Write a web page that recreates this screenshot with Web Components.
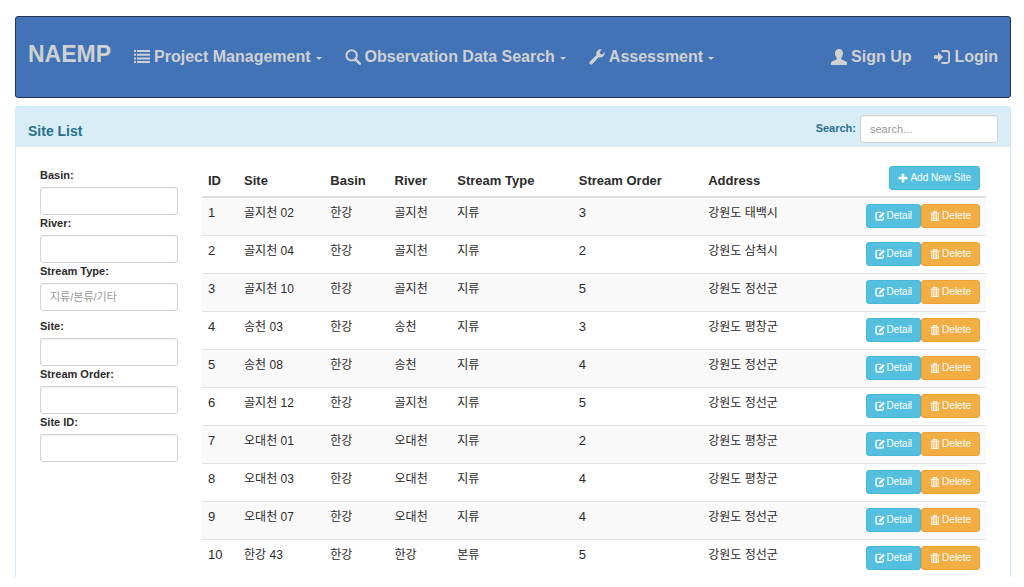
<!DOCTYPE html>
<html lang="en">
<head>
<meta charset="utf-8">
<meta name="viewport" content="width=device-width, initial-scale=1">
<title>NAEMP - Site List</title>
<style>
  :root {
    --primary: #4373b7;
    --info: #54bfdf;
    --warning: #f2ad43;
    --heading: #d9edf7;
    --heading-text: #28708f;
    --field-width: 138px;
  }

  body {
    margin: 16px 13px 0 15px;
    background: #ffffff;
    color: #2b2b2b;
    font-family: "Liberation Sans", "Noto Sans CJK KR", sans-serif;
    font-size: 13px;
  }
</style>
</head>
<body>
  <app-navbar>
    <a slot="brand" href="#">NAEMP</a>
    <nav-item icon="list" dropdown>Project Management</nav-item>
    <nav-item icon="search" dropdown>Observation Data Search</nav-item>
    <nav-item icon="wrench" dropdown>Assessment</nav-item>
    <nav-item slot="right" icon="user" href="#signup">Sign Up</nav-item>
    <nav-item slot="right" icon="login" href="#login">Login</nav-item>
  </app-navbar>

  <app-panel>
    <span slot="title">Site List</span>
    <text-field slot="tools" label="Search:" placeholder="search..." inline></text-field>
    <site-filter slot="side"></site-filter>
    <site-table></site-table>
  </app-panel>

<script>
const icons = {
  list: `<path d="M0 1h2v2H0zM3 1h13v2H3zM0 4.7h2v2H0zM3 4.7h13v2H3zM0 8.4h2v2H0zM3 8.4h13v2H3zM0 12.1h2v2H0zM3 12.1h13v2H3z"/>`,
  search: `<circle cx="6.6" cy="6.4" r="5.2" fill="none" stroke="currentColor" stroke-width="2"/><path d="M10.4 10.4l4.4 4.2" stroke="currentColor" stroke-width="2.6" stroke-linecap="round"/>`,
  wrench: `<path d="M15.8 3.2a4.6 4.6 0 0 1-6.2 5L3.4 14.9a1.6 1.6 0 0 1-2.5-2.4L7.4 6.2A4.6 4.6 0 0 1 12.9.4L10.7 2.8l.5 2.2 2.1.5z"/>`,
  user: `<path d="M8 0c2.5 0 4 1.8 4 4.2 0 1.8-.7 3.500-1.700 4.500-.3.9 0 1.600.8 2l3.500 1.500c1 .4 1.400 1.200 1.400 2.300V16H0v-1.500c0-1.100.4-1.900 1.400-2.300l3.500-1.500c.8-.4 1.100-1.100.8-2C4.700 7.700 4 6 4 4.200 4 1.800 5.500 0 8 0z"/>`,
  login: `<path d="M7.5 2.100h5.500a2.200 2.200 0 0 1 2.200 2.200v7.400a2.200 2.200 0 0 1-2.200 2.200H7.500" fill="none" stroke="currentColor" stroke-width="2"/><path d="M0 6.200h4V3L9 8l-5 5V9.800H0z"/>`,
  plus: `<path d="M6 1h4v5h5v4h-5v5H6v-5H1V6h5z"/>`,
  edit: `<path d="M10 2.2H3.700A2 2 0 0 0 1.700 4.200v8.200a2 2 0 0 0 2 2h7.600a2 2 0 0 0 2-2V9.500" fill="none" stroke="currentColor" stroke-width="2.2"/><path d="M6 11l.6-3.200 6.600-6.400L15.800 4 9.200 10.400z"/>`,
  trash: `<path d="M1 3.500h14M5.500 3V1h5v2" fill="none" stroke="currentColor" stroke-width="1.7"/><path d="M2.800 5v10.200h10.400V5M5.400 5v10M8 5v10M10.600 5v10" fill="none" stroke="currentColor" stroke-width="1.5"/>`,
};

class GlyphIcon extends HTMLElement {
  constructor() {
    super();
    this.attachShadow({ mode: "open" });
  }

  connectedCallback() {
    this.shadowRoot.innerHTML = /* html */ `
      <style>
      :host {
        display: inline-block;
        flex: none;
        width: 1em;
        height: 1em;
      }
      svg {
        display: block;
        width: 100%;
        height: 100%;
      }
      </style>
      <svg viewBox="0 0 16 16" fill="currentColor" aria-hidden="true">${icons[this.getAttribute("name")]}</svg>
    `;
  }
}

class NavItem extends HTMLElement {
  constructor() {
    super();
    this.attachShadow({ mode: "open" });
  }

  connectedCallback() {
    const content = `<glyph-icon name="${this.getAttribute("icon")}"></glyph-icon><slot></slot>`;
    const control = this.hasAttribute("dropdown")
      ? `<button type="button" aria-haspopup="true">${content}<i class="caret"></i></button>`
      : `<a href="${this.getAttribute("href")}">${content}</a>`;

    this.shadowRoot.innerHTML = /* html */ `
      <style>
      :host {
        display: block;
      }
      a, button {
        display: flex;
        align-items: baseline;
        gap: 4px;
        padding: 0;
        border: 0;
        background: none;
        color: inherit;
        font: inherit;
        text-decoration: none;
        white-space: nowrap;
        cursor: pointer;
      }
      a:hover, button:hover {
        color: #ffffff;
      }
      glyph-icon {
        align-self: center;
      }
      .caret {
        align-self: center;
        margin: 2px 0 0 1px;
        border-top: 3px solid;
        border-left: 3px solid transparent;
        border-right: 3px solid transparent;
      }
      </style>
      ${control}
    `;
  }
}

const navbarTemplate = document.createElement("template");
navbarTemplate.innerHTML = /* html */ `
  <style>
  :host {
    display: block;
  }
  nav {
    display: flex;
    align-items: baseline;
    gap: 23px;
    padding: 25px 12px 28px;
    border: 1px solid #1d3456;
    border-radius: 3px;
    background: var(--primary);
    color: #d0d1d2;
    font-size: 16px;
    font-weight: bold;
    line-height: 24px;
  }
  .right {
    display: flex;
    gap: 23px;
    margin-left: auto;
  }
  ::slotted(a) {
    color: inherit;
    font-size: 23px;
    text-decoration: none;
  }
  </style>
  <nav>
    <slot name="brand"></slot>
    <slot></slot>
    <div class="right"><slot name="right"></slot></div>
  </nav>
`;

class AppNavbar extends HTMLElement {
  constructor() {
    super();
    this.attachShadow({ mode: "open" });
    this.shadowRoot.appendChild(navbarTemplate.content.cloneNode(true));
  }
}

const panelTemplate = document.createElement("template");
panelTemplate.innerHTML = /* html */ `
  <style>
  :host {
    display: block;
    margin-top: 8px;
    border: 1px solid #c8edf7;
    border-bottom: 0;
    border-radius: 3px 3px 0 0;
  }
  header {
    display: flex;
    align-items: flex-end;
    justify-content: space-between;
    padding: 8px 12px 4px;
    background: var(--heading);
    color: var(--heading-text);
  }
  h1 {
    margin: 0;
    font-size: 14px;
    line-height: 24px;
  }
  .body {
    display: flex;
    align-items: flex-start;
    gap: 24px;
    padding: 13px 24px 0;
  }
  .content {
    flex: 1;
    min-width: 0;
  }
  </style>
  <header>
    <h1><slot name="title"></slot></h1>
    <slot name="tools"></slot>
  </header>
  <div class="body">
    <slot name="side"></slot>
    <div class="content"><slot></slot></div>
  </div>
`;

class AppPanel extends HTMLElement {
  constructor() {
    super();
    this.attachShadow({ mode: "open" });
    this.shadowRoot.appendChild(panelTemplate.content.cloneNode(true));
  }
}

class TextField extends HTMLElement {
  constructor() {
    super();
    this.attachShadow({ mode: "open" });
  }

  connectedCallback() {
    this.shadowRoot.innerHTML = /* html */ `
      <style>
      :host {
        display: block;
        font-size: 11px;
      }
      :host([inline]) {
        display: flex;
        gap: 4px;
      }
      label {
        display: block;
        margin-bottom: 4px;
        font-weight: bold;
        line-height: 16px;
      }
      :host([inline]) label {
        margin: 0;
        line-height: 26px;
      }
      input {
        display: block;
        box-sizing: border-box;
        width: var(--field-width);
        height: 28px;
        padding: 0 9px;
        border: 1px solid #d2d2d2;
        border-radius: 3px;
        background: #ffffff;
        box-shadow: inset 0 1px 1px rgba(0, 0, 0, 0.06);
        color: #555555;
        font: inherit;
      }
      input:focus {
        border-color: #66afe9;
        outline: 0;
      }
      input::placeholder {
        color: #999999;
      }
      </style>
      <label for="field">${this.getAttribute("label")}</label>
      <input id="field" type="text" placeholder="${this.getAttribute("placeholder") || ""}">
    `;
  }
}

const filterTemplate = document.createElement("template");
filterTemplate.innerHTML = /* html */ `
  <style>
  :host {
    display: block;
    flex: none;
    padding-top: 7px;
  }
  .group + .group {
    margin-top: 7px;
  }
  </style>
  <div class="group">
    <text-field label="Basin:"></text-field>
    <text-field label="River:"></text-field>
    <text-field label="Stream Type:" placeholder="지류/본류/기타"></text-field>
  </div>
  <div class="group">
    <text-field label="Site:"></text-field>
    <text-field label="Stream Order:"></text-field>
    <text-field label="Site ID:"></text-field>
  </div>
`;

class SiteFilter extends HTMLElement {
  constructor() {
    super();
    this.attachShadow({ mode: "open" });
    this.shadowRoot.appendChild(filterTemplate.content.cloneNode(true));
  }
}

class AppButton extends HTMLElement {
  constructor() {
    super();
    this.attachShadow({ mode: "open" });
  }

  connectedCallback() {
    this.shadowRoot.innerHTML = /* html */ `
      <style>
      :host {
        display: block;
      }
      button {
        display: flex;
        align-items: center;
        gap: 2px;
        height: 24px;
        padding: 0 8px;
        border: 1px solid #46b8da;
        border-radius: 3px;
        background: var(--info);
        color: #ffffff;
        font: inherit;
        font-size: 10px;
        white-space: nowrap;
        cursor: pointer;
      }
      :host([warning]) button {
        border-color: #eea236;
        background: var(--warning);
      }
      </style>
      <button type="button"><glyph-icon name="${this.getAttribute("icon")}"></glyph-icon><slot></slot></button>
    `;
  }
}

const sites = [
  [1, "골지천 02", "한강", "골지천", "지류", 3, "강원도 태백시"],
  [2, "골지천 04", "한강", "골지천", "지류", 2, "강원도 삼척시"],
  [3, "골지천 10", "한강", "골지천", "지류", 5, "강원도 정선군"],
  [4, "송천 03", "한강", "송천", "지류", 3, "강원도 평창군"],
  [5, "송천 08", "한강", "송천", "지류", 4, "강원도 정선군"],
  [6, "골지천 12", "한강", "골지천", "지류", 5, "강원도 정선군"],
  [7, "오대천 01", "한강", "오대천", "지류", 2, "강원도 평창군"],
  [8, "오대천 03", "한강", "오대천", "지류", 4, "강원도 평창군"],
  [9, "오대천 07", "한강", "오대천", "지류", 4, "강원도 정선군"],
  [10, "한강 43", "한강", "한강", "본류", 5, "강원도 정선군"],
];

class SiteTable extends HTMLElement {
  constructor() {
    super();
    this.attachShadow({ mode: "open" });
  }

  connectedCallback() {
    this.shadowRoot.innerHTML = /* html */ `
      <style>
      :host {
        display: block;
      }
      table {
        width: 100%;
        table-layout: fixed;
        border-spacing: 0;
        line-height: 18px;
      }
      th, td {
        box-sizing: border-box;
        padding: 6px;
        text-align: left;
      }
      th {
        border-bottom: 2px solid #dddddd;
        vertical-align: bottom;
      }
      td {
        padding-bottom: 7px;
        border-top: 1px solid #e2e2e2;
        vertical-align: top;
      }
      tbody tr:first-child td {
        border-top: 0;
      }
      tbody tr:nth-child(odd) {
        background: #f9f9f9;
      }
      .text {
        font-size: 12px;
      }
      .actions {
        display: flex;
        justify-content: flex-end;
        font-weight: normal;
      }
      .id { width: 4.6%; }
      .site { width: 11%; }
      .basin { width: 8.2%; }
      .river { width: 8%; }
      .type { width: 15.5%; }
      .order { width: 16.5%; }
      .address { width: 16%; }
      </style>
      <table>
        <thead>
          <tr>
            <th class="id">ID</th>
            <th class="site">Site</th>
            <th class="basin">Basin</th>
            <th class="river">River</th>
            <th class="type">Stream Type</th>
            <th class="order">Stream Order</th>
            <th class="address">Address</th>
            <th><div class="actions"><app-button icon="plus">Add New Site</app-button></div></th>
          </tr>
        </thead>
        <tbody>${sites.map((site) => this.renderRow(site)).join("")}</tbody>
      </table>
    `;
  }

  renderRow(site) {
    const cells = site
      .map((value) => `<td${typeof value === "string" ? ' class="text"' : ""}>${value}</td>`)
      .join("");
    return `<tr>${cells}<td><div class="actions">
      <app-button icon="edit">Detail</app-button>
      <app-button icon="trash" warning>Delete</app-button>
    </div></td></tr>`;
  }
}

customElements.define("glyph-icon", GlyphIcon);
customElements.define("nav-item", NavItem);
customElements.define("app-navbar", AppNavbar);
customElements.define("app-panel", AppPanel);
customElements.define("text-field", TextField);
customElements.define("site-filter", SiteFilter);
customElements.define("app-button", AppButton);
customElements.define("site-table", SiteTable);
</script>
</body>
</html>
